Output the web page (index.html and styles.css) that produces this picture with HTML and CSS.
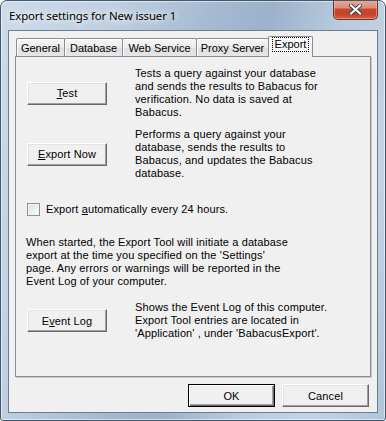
FILE: index.html
```html
<!DOCTYPE html>
<html>
<head>
<meta charset="utf-8">
<link rel="stylesheet" href="styles.css">
</head>
<body>
<div class="window">
  <div class="titlebar">
    <span class="title">Export settings for New issuer 1</span>
    <div class="close">
      <svg width="13" height="11" viewBox="0 0 13 11">
        <path d="M2 1.5 L11 9.5 M11 1.5 L2 9.5" stroke="#3a4450" stroke-width="4" stroke-linecap="square" fill="none"/>
        <path d="M2 1.5 L11 9.5 M11 1.5 L2 9.5" stroke="#ffffff" stroke-width="2" stroke-linecap="square" fill="none"/>
      </svg>
    </div>
  </div>
  <div class="client">
    <div class="tabs">
      <div class="tab t-general">General</div>
      <div class="tab t-database">Database</div>
      <div class="tab t-web">Web Service</div>
      <div class="tab t-proxy">Proxy Server</div>
      <div class="tab active t-export"><span class="focus">Export</span></div>
    </div>
    <div class="panel">
      <div class="row">
        <button class="btn"><u>T</u>est</button>
        <div class="desc">Tests a query against your database<br>and sends the results to Babacus for<br>verification. No data is saved at<br>Babacus.</div>
      </div>
      <div class="row row2">
        <button class="btn"><u>E</u>xport Now</button>
        <div class="desc">Performs a query against your<br>database, sends the results to<br>Babacus, and updates the Babacus<br>database.</div>
      </div>
      <label class="check">
        <span class="box"></span>
        <span>Export <u>a</u>utomatically every 24 hours.</span>
      </label>
      <p class="para">When started, the Export Tool will initiate a database<br>export at the time you specified on the 'Settings'<br>page. Any errors or warnings will be reported in the<br>Event Log of your computer.</p>
      <div class="row row3">
        <button class="btn">E<u>v</u>ent Log</button>
        <div class="desc">Shows the Event Log of this computer.<br>Export Tool entries are located in<br>'Application' , under 'BabacusExport'.</div>
      </div>
    </div>
    <div class="footer">
      <button class="btn wide default">OK</button>
      <button class="btn wide">Cancel</button>
    </div>
  </div>
</div>
</body>
</html>
```

FILE: styles.css
```css
* { box-sizing: border-box; }
html, body { margin: 0; padding: 0; background: #ffffff; }

.window {
  width: 386px;
  height: 421px;
  border: 1px solid #44566a;
  border-radius: 7px 7px 3px 3px;
  background: linear-gradient(105deg, #cddaea 0%, #c0d0e2 22%, #a6bbd2 42%, #9cb2ca 55%, #b9cbdf 70%, #c4d4e6 85%, #b0c4da 100%);
  box-shadow: inset 0 0 0 1px rgba(255,255,255,0.55);
  display: flex;
  flex-direction: column;
  padding: 0 7px 7px 7px;
  overflow: hidden;
}

.titlebar {
  height: 29px;
  display: flex;
  align-items: center;
  margin: 0 -7px;
  padding-left: 8px;
}
.title {
  font-family: "Segoe UI", "Noto Sans", "Open Sans", sans-serif;
  font-size: 11.4px;
  letter-spacing: -0.1px;
  color: #000;
  text-shadow: 0 0 6px rgba(255,255,255,0.95), 0 0 10px rgba(255,255,255,0.8), 0 0 14px rgba(255,255,255,0.6);
}
.close {
  margin-left: auto;
  margin-right: 7px;
  align-self: flex-start;
  margin-top: -1px;
  width: 45px;
  height: 20px;
  border: 1px solid #6e3428;
  border-top: none;
  border-radius: 0 0 5px 5px;
  background: linear-gradient(#e9aa9b 0%, #dd8d7a 40%, #c8452c 50%, #c7432b 75%, #d9623f 100%);
  box-shadow: inset 0 0 0 1px rgba(255,200,190,0.45);
  display: flex;
  align-items: center;
  justify-content: center;
}

.client {
  flex: 1;
  background: #f0f0f0;
  border: 1px solid #6b7d91;
  display: flex;
  flex-direction: column;
  padding: 5px 6px 0 6px;
  font-family: "Liberation Sans", Arial, sans-serif;
  font-size: 11px;
  letter-spacing: 0.12px;
  color: #000;
}

.tabs {
  height: 20px;
  display: flex;
  align-items: flex-end;
  padding-left: 1px;
  position: relative;
  z-index: 1;
}
.tab {
  height: 18px;
  border: 1px solid #898c95;
  border-bottom: none;
  border-radius: 2px 2px 0 0;
  margin-left: -1px;
  background: linear-gradient(#f6f6f6 0%, #ebebeb 50%, #dedede 51%, #e6e6e6 100%);
  box-shadow: inset 1px 1px 0 #ffffff;
  display: flex;
  align-items: center;
  justify-content: center;
  white-space: nowrap;
  letter-spacing: 0;
}
.tabs .tab:first-child { margin-left: 0; }
.t-general { width: 49px; }
.t-database { width: 59px; }
.t-web { width: 75px; }
.t-proxy { width: 73px; }
.t-export { width: 45px; }
.tab.active {
  height: 21px;
  margin-bottom: -1px;
  background: linear-gradient(#ffffff, #f4f4f4 60%, #f0f0f0);
  box-shadow: none;
  align-items: flex-start;
  padding-top: 1px;
}
.focus {
  outline: 1px dotted #000;
  padding: 0 2px;
  line-height: 13px;
}

.panel {
  height: 321px;
  border: 1px solid #898c95;
  box-shadow: 1px 1px 0 #c9c9c9;
  background: #f0f0f0;
  padding: 10px 11px 0 11px;
  display: flex;
  flex-direction: column;
}

.row {
  display: flex;
  align-items: center;
  gap: 28px;
}
.row2 { margin-top: 9px; }
.row3 { margin-top: 13px; }
.desc { line-height: 13px; white-space: nowrap; }

.btn {
  width: 80px;
  height: 23px;
  font-family: "Liberation Sans", Arial, sans-serif;
  font-size: 11px;
  letter-spacing: 0.12px;
  color: #000;
  background: #f0f0f0;
  border: 1px solid;
  border-color: #ffffff #696969 #696969 #ffffff;
  box-shadow: inset -1px -1px 0 #a0a0a0, inset 1px 1px 0 #e3e3e3;
  padding: 0;
  flex: none;
}
.btn.wide { width: 87px; }
.btn.default {
  border: 1px solid #000;
  box-shadow: inset 1px 1px 0 #ffffff, inset -1px -1px 0 #696969, inset -2px -2px 0 #a0a0a0;
}

.check {
  margin-top: 23px;
  height: 13px;
  display: flex;
  align-items: center;
  gap: 6px;
  line-height: 13px;
}
.box {
  width: 13px;
  height: 13px;
  border: 1px solid #8e8f8f;
  background: linear-gradient(135deg, #dcdcdc, #ffffff);
  box-shadow: inset 0 0 0 1px #f4f4f4;
}

.para {
  margin: 20px 0 0 -1px;
  line-height: 13px;
}

.footer {
  display: flex;
  justify-content: flex-end;
  gap: 7px;
  padding: 7px 2px 0 0;
}
```
